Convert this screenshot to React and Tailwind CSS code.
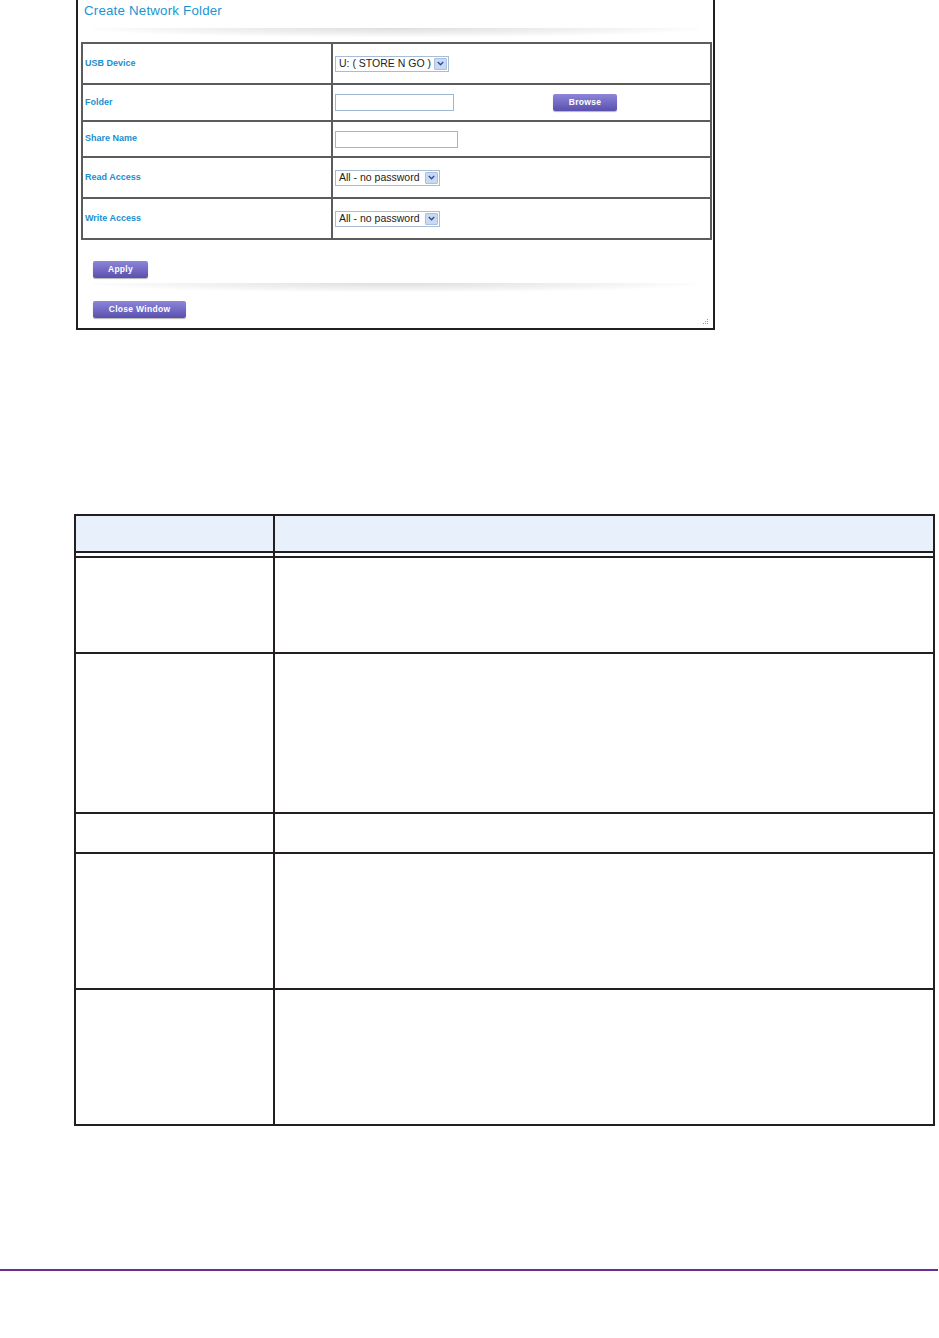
import React from "react";

const font = { fontFamily: '"Liberation Sans", Arial, sans-serif' };

function Select({ text, width }) {
  return (
    <div
      className="flex items-center h-[16px] border border-[#a9bcd4] bg-white pl-[3px] pr-[1px] justify-between"
      style={{ width }}
    >
      <span className="text-[10.5px] leading-none text-[#222] whitespace-nowrap">{text}</span>
      <span className="flex items-center justify-center w-[13px] h-[12px] bg-[#c9d9f2] border border-[#aac0e2] rounded-[1px]">
        <svg width="7" height="5" viewBox="0 0 7 5">
          <path d="M0.8 1 L3.5 3.8 L6.2 1" fill="none" stroke="#2a4f9a" strokeWidth="1.4" />
        </svg>
      </span>
    </div>
  );
}

function Input({ width }) {
  return <div className="h-[17px] border border-[#9fb5d2] bg-white" style={{ width }} />;
}

function PurpleButton({ children, width }) {
  return (
    <div
      className="h-[17px] rounded-[2px] bg-gradient-to-b from-[#8d86da] to-[#5a50ae] flex items-center justify-center text-white font-bold text-[8.5px] tracking-[0.3px] shadow-[0_1px_1px_rgba(0,0,0,0.3)]"
      style={{ width }}
    >
      {children}
    </div>
  );
}

function Label({ children }) {
  return <span className="text-[9px] font-bold text-[#1b8fd0] pl-[2px]">{children}</span>;
}

function FormRow({ h, label, children, last }) {
  return (
    <div className={`flex ${last ? "" : "border-b-2 border-[#5c5c5c]"}`} style={{ height: h }}>
      <div className="w-[250px] border-r-2 border-[#5c5c5c] flex items-center">
        <Label>{label}</Label>
      </div>
      <div className="flex-1 flex items-center pl-[2px]">{children}</div>
    </div>
  );
}

function Shadow() {
  return (
    <div className="h-[9px] mx-[14px] bg-[radial-gradient(ellipse_at_center_top,rgba(0,0,0,0.13),rgba(0,0,0,0.04)_55%,transparent_75%)]" />
  );
}

function DescRow({ h, last }) {
  return (
    <div className={`flex ${last ? "" : "border-b-2 border-[#231f20]"}`} style={{ height: h }}>
      <div className="w-[199px] border-r-2 border-[#231f20]" />
      <div className="flex-1" />
    </div>
  );
}

export default function App() {
  return (
    <div className="w-[939px] h-[1338px] bg-white flex flex-col" style={font}>
      {/* Screenshot frame */}
      <div className="relative ml-[76px] w-[639px] h-[330px] border-x-2 border-b-2 border-[#231f20] flex flex-col">
        <div className="ml-[6px] mt-[3px] text-[13.3px] leading-[15px] text-[#1896d3] tracking-[0.2px]">
          Create Network Folder
        </div>
        <div className="mt-[10px]">
          <Shadow />
        </div>
        <div className="ml-[3px] mt-[5px] w-[631px] border-2 border-[#5c5c5c] flex flex-col">
          <FormRow h={41} label="USB Device">
            <Select text="U: ( STORE N GO )" width={114} />
          </FormRow>
          <FormRow h={37} label="Folder">
            <Input width={119} />
            <div className="ml-[99px]">
              <PurpleButton width={64}>Browse</PurpleButton>
            </div>
          </FormRow>
          <FormRow h={36} label="Share Name">
            <Input width={123} />
          </FormRow>
          <FormRow h={41} label="Read Access">
            <Select text="All - no password" width={105} />
          </FormRow>
          <FormRow h={39} label="Write Access" last>
            <Select text="All - no password" width={105} />
          </FormRow>
        </div>
        <div className="ml-[15px] mt-[21px]">
          <PurpleButton width={55}>Apply</PurpleButton>
        </div>
        <div className="mt-[5px]">
          <Shadow />
        </div>
        <div className="ml-[15px] mt-[9px]">
          <PurpleButton width={93}>Close Window</PurpleButton>
        </div>
        <svg className="absolute right-[4px] bottom-[3px]" width="6" height="6" viewBox="0 0 6 6">
          <rect x="4" y="0" width="1" height="1" fill="#999" />
          <rect x="4" y="2" width="1" height="1" fill="#999" />
          <rect x="2" y="2" width="1" height="1" fill="#999" />
          <rect x="4" y="4" width="1" height="1" fill="#999" />
          <rect x="2" y="4" width="1" height="1" fill="#999" />
          <rect x="0" y="4" width="1" height="1" fill="#999" />
        </svg>
      </div>

      {/* Description table */}
      <div className="ml-[74px] mt-[184px] w-[861px] border-2 border-[#231f20] flex flex-col">
        <div className="flex h-[37px] bg-[#e8f1fb] border-b-2 border-[#231f20]">
          <div className="w-[199px] border-r-2 border-[#231f20]" />
          <div className="flex-1" />
        </div>
        <DescRow h={5} />
        <DescRow h={96} />
        <DescRow h={160} />
        <DescRow h={40} />
        <DescRow h={136} />
        <DescRow h={134} last />
      </div>

      {/* Footer rule */}
      <div className="mt-[143px] h-[1.5px] w-[938px] bg-[#6b2c95]" />
    </div>
  );
}
